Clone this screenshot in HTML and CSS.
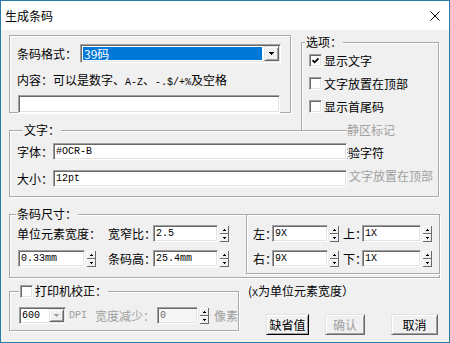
FILE: index.html
```html
<!DOCTYPE html>
<html lang="zh-CN">
<head>
    <meta charset="UTF-8">
    <title>生成条码</title>
    <link rel="stylesheet" href="styles.css">
</head>
<body>
    <!-- shared little glyphs -->
    <svg class="defs" width="0" height="0">
        <symbol id="spin" viewBox="0 0 9 16">
            <rect width="9" height="16" fill="#f0f0f0"/>
            <rect x="0" y="0" width="8" height="1" fill="#fff"/>
            <rect x="0" y="0" width="1" height="7" fill="#fff"/>
            <rect x="0" y="7" width="9" height="1" fill="#696969"/>
            <rect x="8" y="0" width="1" height="8" fill="#696969"/>
            <rect x="0" y="8" width="8" height="1" fill="#fff"/>
            <rect x="0" y="8" width="1" height="7" fill="#fff"/>
            <rect x="0" y="15" width="9" height="1" fill="#696969"/>
            <rect x="8" y="8" width="1" height="8" fill="#696969"/>
            <rect x="4" y="3" width="1" height="1"/>
            <rect x="3" y="4" width="3" height="1"/>
            <rect x="3" y="11" width="3" height="1"/>
            <rect x="4" y="12" width="1" height="1"/>
        </symbol>
        <symbol id="arrow" viewBox="0 0 5 3">
            <rect x="0" y="0" width="5" height="1"/>
            <rect x="1" y="1" width="3" height="1"/>
            <rect x="2" y="2" width="1" height="1"/>
        </symbol>
        <symbol id="tick" viewBox="0 0 7 7">
            <path d="M0.5 3.2L2.6 5.3L6.5 1.4" fill="none" stroke="#000" stroke-width="1.8"/>
        </symbol>
    </svg>

    <div class="window">
        <div class="titlebar">
            <span class="title">生成条码</span>
            <svg class="close" width="10" height="10" viewBox="0 0 10 10">
                <path d="M0.5 0.5L9.5 9.5M9.5 0.5L0.5 9.5" stroke="#000" stroke-width="1"/>
            </svg>
        </div>

        <div class="content">
            <div class="top">
                <div class="panel format">
                    <div class="row">
                        <span class="label lbl-format">条码格式：</span>
                        <div class="combo">
                            <span class="selected">39码</span>
                            <span class="raised drop-btn"><svg width="5" height="3"><use href="#arrow"/></svg></span>
                        </div>
                    </div>
                    <div class="hint">内容：可以是数字、<span class="mono">A-Z</span>、<span class="mono">-.$/+%</span>及空格</div>
                    <input class="field content-field" type="text" value="">
                </div>

                <div class="group options">
                    <div class="legend">选项：</div>
                    <div class="opt"><span class="check"><svg width="7" height="7"><use href="#tick"/></svg></span>显示文字</div>
                    <div class="opt"><span class="check"></span>文字放置在顶部</div>
                    <div class="opt"><span class="check"></span>显示首尾码</div>
                    <div class="opt dim under-quiet">静区标记</div>
                    <div class="opt under-check">校验字符</div>
                    <div class="opt dim under-top">文字放置在顶部</div>
                </div>

                <div class="group text">
                    <div class="legend">文字：</div>
                    <div class="row text-row">
                        <span class="label lbl-text">字体：</span>
                        <input class="field text-field" type="text" value="#OCR-B">
                    </div>
                    <div class="row text-row second">
                        <span class="label lbl-text">大小：</span>
                        <input class="field text-field" type="text" value="12pt">
                    </div>
                </div>
            </div>

            <div class="group size">
                <div class="size-left">
                    <div class="legend">条码尺寸：</div>
                    <div class="row size-row">
                        <span class="label lbl-unit">单位元素宽度：</span>
                        <span class="label lbl-size">宽窄比：</span>
                        <input class="field num-field" type="text" value="2.5">
                        <svg class="spin" width="9" height="16"><use href="#spin"/></svg>
                    </div>
                    <div class="row size-row second">
                        <input class="field unit-field" type="text" value="0.33mm">
                        <svg class="spin" width="9" height="16"><use href="#spin"/></svg>
                        <span class="label lbl-size gap-left">条码高：</span>
                        <input class="field num-field" type="text" value="25.4mm">
                        <svg class="spin" width="9" height="16"><use href="#spin"/></svg>
                    </div>
                </div>
                <div class="panel margins">
                    <div class="row margin-row">
                        <span class="label lbl-side">左：</span>
                        <input class="field side-field" type="text" value="9X">
                        <svg class="spin" width="9" height="16"><use href="#spin"/></svg>
                        <span class="label lbl-side gap-side">上：</span>
                        <input class="field side-field wide" type="text" value="1X">
                        <svg class="spin" width="9" height="16"><use href="#spin"/></svg>
                    </div>
                    <div class="row margin-row second">
                        <span class="label lbl-side">右：</span>
                        <input class="field side-field" type="text" value="9X">
                        <svg class="spin" width="9" height="16"><use href="#spin"/></svg>
                        <span class="label lbl-side gap-side">下：</span>
                        <input class="field side-field wide" type="text" value="1X">
                        <svg class="spin" width="9" height="16"><use href="#spin"/></svg>
                    </div>
                </div>
            </div>

            <div class="bottom">
                <div class="group printer">
                    <div class="legend"><span class="check"></span>打印机校正：</div>
                    <div class="row printer-row">
                        <div class="combo dpi">
                            <span class="dpi-value">600</span>
                            <span class="raised drop-btn"><svg width="5" height="3" class="grey"><use href="#arrow"/></svg></span>
                        </div>
                        <span class="mono dim dpi-label">DPI</span>
                        <span class="label dim">宽度减少：</span>
                        <input class="field reduce-field" type="text" value="0" disabled>
                        <svg class="spin" width="9" height="16"><use href="#spin"/></svg>
                        <span class="label dim pixel-label">像素</span>
                    </div>
                </div>
                <div class="actions">
                    <div class="note">(<span class="x">X</span>为单位元素宽度）</div>
                    <div class="buttons">
                        <button class="raised btn default">缺省值</button>
                        <button class="raised btn ok" disabled>确认</button>
                        <button class="raised btn cancel">取消</button>
                    </div>
                </div>
            </div>
        </div>
    </div>
</body>
</html>
```

FILE: styles.css
```css
body {
    margin: 0;
    font-family: "Noto Sans CJK SC", sans-serif;
    font-size: 12px;
    color: #000;
    background: #fff;
}
.defs {
    position: absolute;
}
.window {
    width: 450px;
    height: 343px;
    box-sizing: border-box;
    border: 1px solid #2b7bab;
    background: #f0f0f0;
    display: flex;
    flex-direction: column;
}
.titlebar {
    height: 29px;
    flex: none;
    background: #fff;
    display: flex;
    align-items: center;
    justify-content: space-between;
    padding: 0 9px 0 4px;
}
.title {
    line-height: 14px;
}
.content {
    flex: 1;
    padding: 5px 9px 0 8px;
}

/* common bits */
.row {
    display: flex;
    align-items: center;
}
.label {
    line-height: 14px;
    white-space: nowrap;
    flex: none;
}
.mono {
    font-family: "Liberation Mono", monospace;
    font-size: 10px;
}
.dim {
    color: #a0a0a0;
}
.panel,
.group {
    border: 1px solid #a9a9a9;
    box-shadow: inset 1px 1px 0 #fff, 1px 1px 0 #fff;
    box-sizing: border-box;
}
.legend {
    width: fit-content;
    margin: -8px 0 0 6px;
    padding: 0 1px;
    line-height: 14px;
    background: #f0f0f0;
    display: flex;
    align-items: center;
}
.field {
    height: 17px;
    box-sizing: border-box;
    margin: 0;
    padding: 0 0 0 2px;
    background: #fff;
    border: 1px solid;
    border-color: #a0a0a0 #fff #fff #a0a0a0;
    box-shadow: inset 1px 1px 0 #696969, inset -1px -1px 0 #e3e3e3;
    font-family: "Liberation Mono", monospace;
    font-size: 10px;
    color: #000;
    outline: none;
}
.raised {
    box-sizing: border-box;
    background: #f0f0f0;
    border: 1px solid;
    border-color: #e3e3e3 #696969 #696969 #e3e3e3;
    box-shadow: inset 1px 1px 0 #fff, inset -1px -1px 0 #a0a0a0;
}
.spin {
    flex: none;
    margin-left: 2px;
}
.check {
    width: 13px;
    height: 13px;
    box-sizing: border-box;
    flex: none;
    background: #fff;
    border: 1px solid;
    border-color: #a0a0a0 #fff #fff #a0a0a0;
    box-shadow: inset 1px 1px 0 #696969, inset -1px -1px 0 #e3e3e3;
    display: flex;
    align-items: center;
    justify-content: center;
    margin-right: 2px;
}

/* top area: format box, options and text groups overlap */
.top {
    display: grid;
    grid-template-columns: 282px 10px 46px 92px;
    grid-template-rows: 78px 74px;
    row-gap: 10px;
}
.format {
    grid-column: 1;
    grid-row: 1;
    padding: 8px 9px 0 7px;
}
.lbl-format {
    width: 63px;
}
.combo {
    flex: 1;
    height: 19px;
    box-sizing: border-box;
    padding: 1px;
    background: #fff;
    border: 1px solid;
    border-color: #a0a0a0 #fff #fff #a0a0a0;
    box-shadow: inset 1px 1px 0 #696969, inset -1px -1px 0 #e3e3e3;
    display: flex;
}
.selected {
    flex: 1;
    margin: 1px 2px 1px 1px;
    background: #0078d7;
    color: #fff;
    line-height: 13px;
    padding-left: 1px;
}
.drop-btn {
    width: 15px;
    height: 15px;
    flex: none;
    display: flex;
    align-items: center;
    justify-content: center;
}
.grey {
    fill: #a0a0a0;
}
.hint {
    margin-top: 10px;
    line-height: 14px;
}
.content-field {
    display: block;
    margin: 5px 0 0 1px;
    width: 262px;
    height: 18px;
}

.options {
    grid-column: 3 / 5;
    grid-row: 1 / 3;
    margin-top: 7px;
}
.options .legend {
    margin-left: 3px;
}
.opt {
    height: 23px;
    display: flex;
    align-items: center;
    padding-left: 7px;
    white-space: nowrap;
}
.under-quiet {
    padding-left: 45px;
}
.under-check {
    padding-left: 34px;
}
.under-top {
    padding-left: 47px;
}

.text {
    grid-column: 1 / 4;
    grid-row: 2;
    margin-top: 7px;
    border-right: none;
    box-shadow: inset 1px 1px 0 #fff, 0 1px 0 #fff;
    background: #f0f0f0;
    position: relative;
    z-index: 1;
    padding-left: 7px;
}
.text-row {
    margin-top: 6px;
}
.text-row.second {
    margin-top: 10px;
}
.lbl-text {
    width: 36px;
}
.text-field {
    width: 294px;
}

/* barcode size */
.size {
    margin-top: 17px;
    display: flex;
}
.size-left {
    width: 236px;
    padding: 0 0 10px 7px;
    box-sizing: border-box;
}
.size-left .legend {
    margin-left: -1px;
}
.size-row {
    margin-top: 4px;
}
.size-row.second {
    margin-top: 8px;
}
.lbl-unit {
    width: 91px;
}
.lbl-size {
    width: 45px;
}
.gap-left {
    margin-left: 12px;
}
.num-field {
    width: 65px;
}
.unit-field {
    width: 67px;
    margin-left: 1px;
}
.margins {
    flex: 1;
    align-self: flex-start;
    height: 60px;
    margin: -1px -1px 0 0;
    padding: 10px 0 0 6px;
}
.margin-row.second {
    margin-top: 8px;
}
.lbl-side {
    width: 19px;
}
.gap-side {
    margin-left: 4px;
}
.side-field {
    width: 56px;
}
.side-field.wide {
    width: 59px;
}

/* printer correction + buttons */
.bottom {
    display: flex;
    align-items: flex-start;
    margin-top: 6px;
}
.printer {
    width: 230px;
    margin-top: 7px;
    padding: 0 0 6px 9px;
}
.printer .legend {
    margin-left: 0;
}
.printer-row {
    margin-top: 9px;
}
.dpi {
    flex: none;
    width: 47px;
    height: 17px;
    align-items: center;
}
.dpi-value {
    flex: 1;
    font-family: "Liberation Mono", monospace;
    font-size: 10px;
    padding-left: 1px;
}
.dpi .drop-btn {
    height: 13px;
}
.dpi-label {
    margin: 0 8px 0 3px;
}
.reduce-field {
    width: 41px;
    margin-left: 2px;
    background: #f6f6f6;
    color: #6d6d6d;
}
.pixel-label {
    margin-left: 5px;
}
.actions {
    margin-left: 9px;
}
.note {
    line-height: 14px;
}
.note .x {
    font-family: "Liberation Mono", monospace;
    font-size: 10px;
}
.buttons {
    display: flex;
    margin: 13px 0 0 18px;
}
.btn {
    height: 21px;
    padding: 0;
    font-family: "Noto Sans CJK SC", sans-serif;
    font-size: 12px;
    color: #000;
}
.btn.default {
    width: 43px;
    border-color: #e3e3e3 #000 #000 #e3e3e3;
}
.btn.ok {
    width: 40px;
    margin-left: 16px;
    color: #a0a0a0;
}
.btn.cancel {
    width: 47px;
    margin-left: 26px;
}
```
